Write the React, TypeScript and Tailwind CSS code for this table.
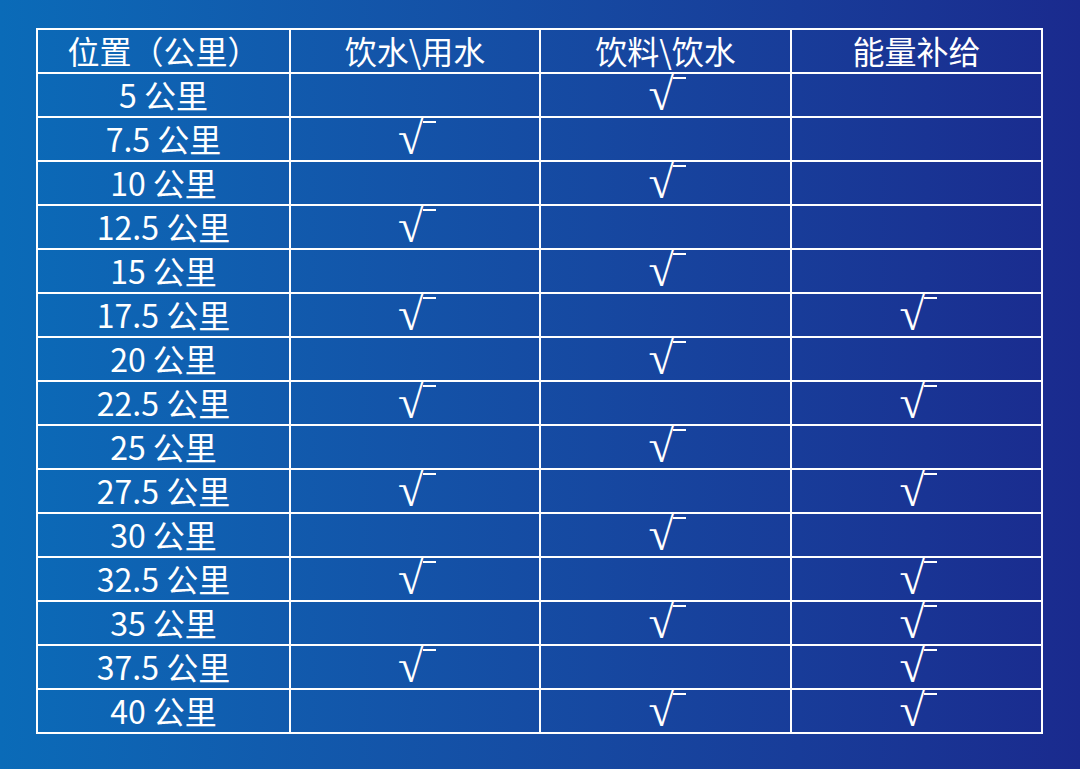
import React from "react";

const rows: [string, boolean, boolean, boolean][] = [
  ["5 公里", false, true, false],
  ["7.5 公里", true, false, false],
  ["10 公里", false, true, false],
  ["12.5 公里", true, false, false],
  ["15 公里", false, true, false],
  ["17.5 公里", true, false, true],
  ["20 公里", false, true, false],
  ["22.5 公里", true, false, true],
  ["25 公里", false, true, false],
  ["27.5 公里", true, false, true],
  ["30 公里", false, true, false],
  ["32.5 公里", true, false, true],
  ["35 公里", false, true, true],
  ["37.5 公里", true, false, true],
  ["40 公里", false, true, true],
];

const font = { fontFamily: '"Noto Sans CJK SC", "Noto Sans", sans-serif' };

function Check() {
  return (
    <span className="flex items-start h-[40px] pl-[4px]">
      <span
        className="text-[47px] leading-[40px] font-normal"
        style={{ fontFamily: '"Liberation Serif", serif' }}
      >
        √
      </span>
      <span className="mt-[3px] ml-[-1px] h-[2px] w-[13px] bg-white" />
    </span>
  );
}

function Cell({ children, check }: { children?: React.ReactNode; check?: boolean }) {
  return (
    <div
      className={
        "h-[44px] border-r-2 border-b-2 border-white flex justify-center " +
        (check ? "items-start" : "items-center pb-[3px]")
      }
    >
      {children}
    </div>
  );
}

export default function App() {
  return (
    <div
      className="w-[1080px] h-[769px] bg-linear-to-r from-[#0a6bb8] to-[#1a2a8e] pl-[36px] pt-[28px] text-white overflow-hidden"
      style={font}
    >
      <div className="grid grid-cols-[253px_250px_251px_251px] w-[1007px] border-l-2 border-t-2 border-white text-[32px] leading-[36px] font-normal">
        <Cell>位置（公里）</Cell>
        <Cell>饮水\用水</Cell>
        <Cell>饮料\饮水</Cell>
        <Cell>能量补给</Cell>
        {rows.map(([label, a, b, c]) => (
          <React.Fragment key={label}>
            <Cell>{label}</Cell>
            <Cell check={a}>{a ? <Check /> : null}</Cell>
            <Cell check={b}>{b ? <Check /> : null}</Cell>
            <Cell check={c}>{c ? <Check /> : null}</Cell>
          </React.Fragment>
        ))}
      </div>
    </div>
  );
}
